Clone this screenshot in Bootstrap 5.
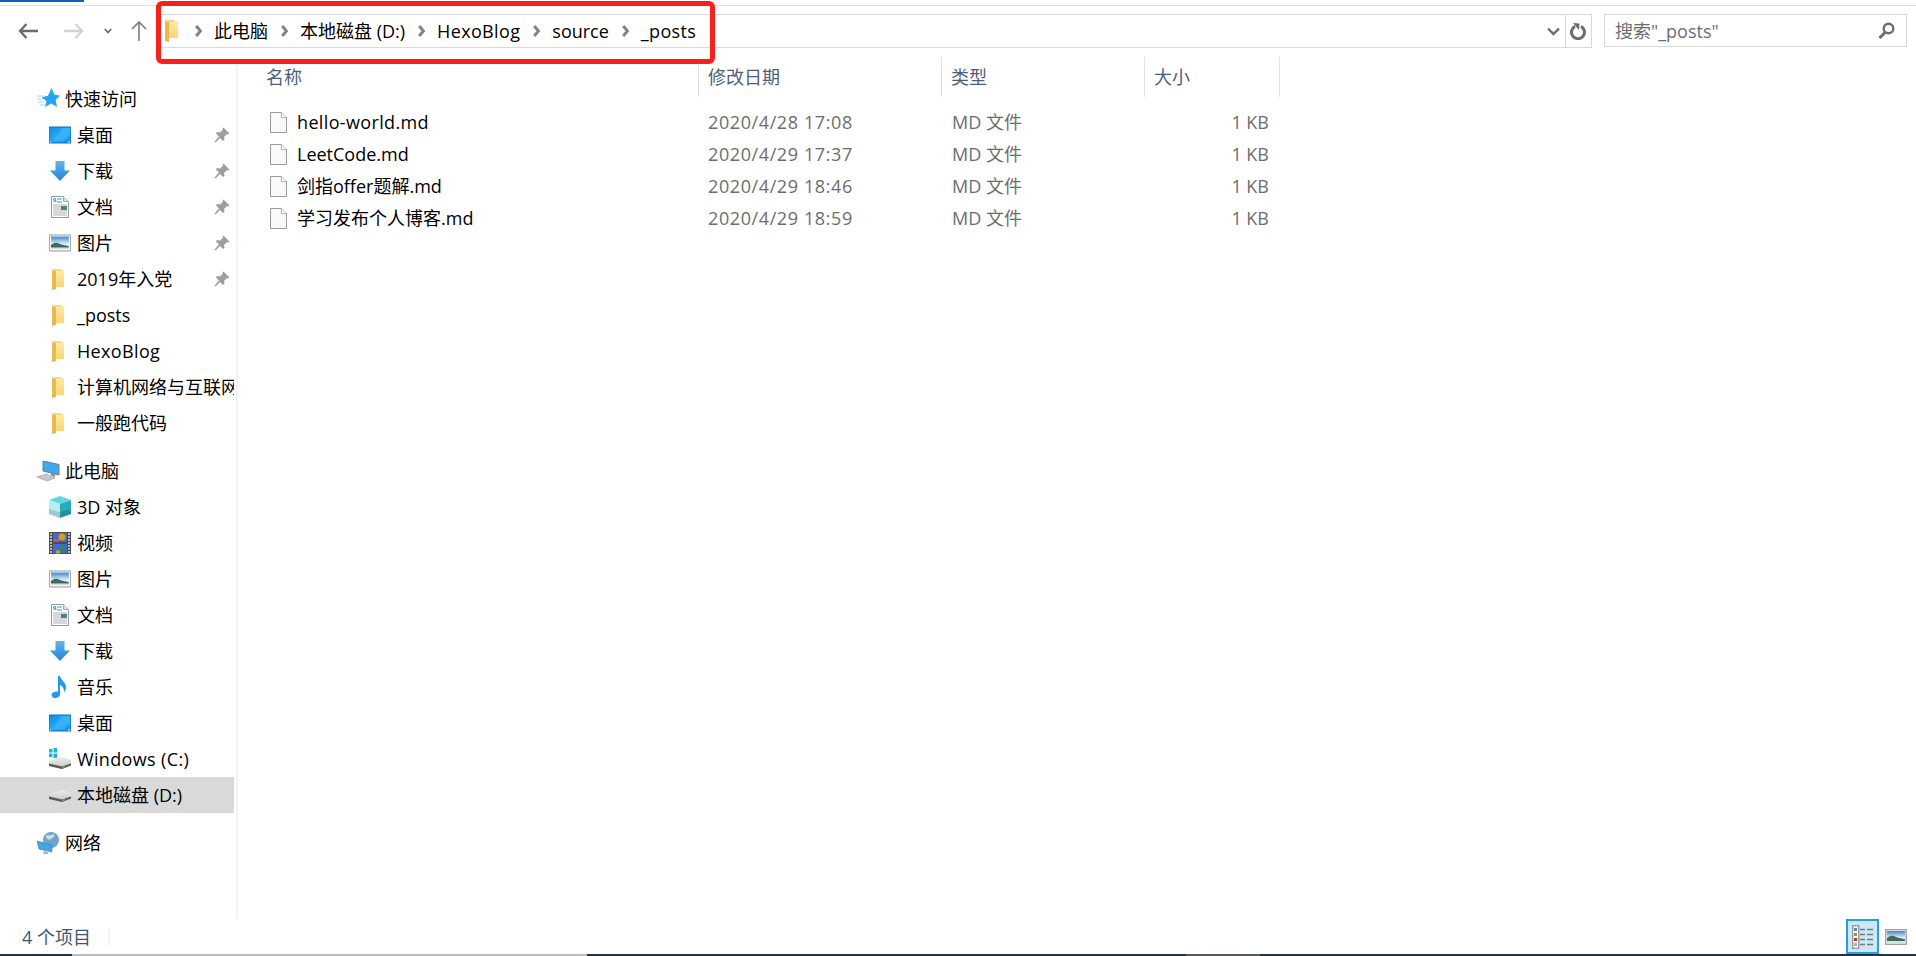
<!DOCTYPE html>
<html lang="zh-CN">
<head>
<meta charset="utf-8">
<title>_posts</title>
<link rel="stylesheet" href="https://cdn.jsdelivr.net/npm/bootstrap@5.3.0/dist/css/bootstrap.min.css">
<style>
html,body{height:956px;overflow:hidden;background:#fff}
body{font-family:"Open Sans","Noto Sans CJK SC",sans-serif;font-size:18px;line-height:24px;color:#000;width:1916px;position:relative}
svg{display:block;flex:none}
.tab-strip{height:6px;border-bottom:1px solid #e0e0e0;background:#fff}
.tab-blue{width:84px;height:2px;background:#0b63b0}
.tool-row{height:51px;padding:8px 9px 0 18px}
.nav-btns{width:142px;height:34px}
.nb-fwd{margin-left:26px}.nb-down{margin-left:20px}.nb-up{margin-left:19px}
.addr{width:1432px;height:34px;border:1px solid #d9d9d9;padding-left:3px}
.crumb-fold{margin-right:16px}
.crumb-sep{margin:0 12px 0 13px}
.crumb-first{margin-left:0}
.latin-wide{letter-spacing:.35px}
.addr-end{height:100%;border-left:1px solid #d9d9d9;width:26px}
.addr-drop{margin-right:5px}
.search-box{width:303px;height:33px;border:1px solid #d9d9d9;margin-left:12px;padding:0 11px 0 10px;color:#6d6d6d}
.body-row{height:862px}
.side{width:238px;border-right:2px solid #f3f3f3;padding-top:24px;flex:none}
.side-group{margin-bottom:12px}
.side-item{height:36px;width:234px;padding-left:49px;white-space:nowrap;overflow:hidden;position:relative}
.side-item.is-top{padding-left:37px}
.side-item.is-sel{background:#d9d9d9}
.side-ico{width:22px;height:22px;margin-right:6px;flex:none}
.side-item.is-top .side-ico{margin-right:5px;width:23px}
.pin-ico{position:absolute;left:214px;top:10px}
.main-pane{min-width:0}
.col-h{height:40px;color:#4c607a}
.col-a{width:461px;padding-left:28px}
.col-b{width:243px;padding-left:9px}
.col-c{width:203px;padding-left:9px}
.col-d{width:135px;padding-left:9px}
.col-h>div{height:40px;border-right:1px solid #e2e2e2;line-height:41px}
.file-list{margin-top:9px}
.file-row{height:32px;color:#6d6d6d}
.f-a{width:461px;padding-left:32px;color:#000}
.f-b{width:243px;padding-left:9px;letter-spacing:.6px}
.f-c{width:203px;padding-left:10px}
.f-d{width:135px;padding-right:11px;text-align:right}
.file-ico{margin-right:10px}
.status-row{height:35px;padding-left:22px;color:#3e5573}
.status-sep{width:2px;height:18px;background:#f3f3f3;margin-left:17px}
.view-btns{margin-left:auto;margin-right:9px;height:100%}
.view-on{width:33px;height:35px;border:2px solid #26a0da;background:#cbe8f6}
.view-off{margin-left:6px}
.base-strip{height:2px;background:#26343c}
.base-gray{width:515px;margin-left:72px;background:#bdbdbd;height:2px}
.base-mid{width:74px;margin-left:599px;background:#555c60;height:2px}
.red-mark{position:absolute;left:156px;top:1px;width:559px;height:63px;border:5px solid #f5211a;border-radius:6px;pointer-events:none}
</style>
</head>
<body>
<svg width="0" height="0" class="position-absolute">
<defs>
<linearGradient id="gBlue" x1="0" y1="0" x2="0" y2="1"><stop offset="0" stop-color="#5eb4ef"/><stop offset="1" stop-color="#2b80d6"/></linearGradient>
<linearGradient id="gDesk" x1="0" y1="0" x2="1" y2="1"><stop offset="0" stop-color="#0a8fe8"/><stop offset=".55" stop-color="#2ba9f6"/><stop offset="1" stop-color="#0f8ce6"/></linearGradient>
<linearGradient id="gFold" x1="0" y1="0" x2="0" y2="1"><stop offset="0" stop-color="#fde9a8"/><stop offset="1" stop-color="#f9d677"/></linearGradient>
<linearGradient id="gSky" x1="0" y1="0" x2="0" y2="1"><stop offset="0" stop-color="#3f86d8"/><stop offset=".55" stop-color="#dfeaf0"/><stop offset="1" stop-color="#d8e0e0"/></linearGradient>
<linearGradient id="gDrive" x1="0" y1="0" x2="0" y2="1"><stop offset="0" stop-color="#ececec"/><stop offset="1" stop-color="#c4c4c4"/></linearGradient>
<symbol id="i-star" viewBox="0 0 23 22"><path d="M14.500 0l3 6.800 5.500.8-4.300 4.500 1.300 7-5.800-3.500-6.200 3.500 1.500-5.800-4.800-4 6.200-1.500z" fill="#29a3f5"/><path d="M0 8h7M0 11h6M1 14h6M3 17h5" stroke="#9bd3f7" stroke-width="1.200"/></symbol>
<symbol id="i-desk" viewBox="0 0 22 22"><rect x="0" y="3" width="22" height="16" fill="url(#gDesk)" stroke="#0c72c0"/><path d="M13 4L4 17h11l6-6V4z" fill="#49b9fb" opacity=".5"/><path d="M1 18h1M19 18h2" stroke="#fff"/></symbol>
<symbol id="i-down" viewBox="0 0 22 22"><path d="M6.500 1h9v9.500H21L11 21 1 10.500h5.500z" fill="url(#gBlue)"/></symbol>
<symbol id="i-doc" viewBox="0 0 22 22"><path d="M2.500 0.500h12l5 5v16h-17z" fill="#fff" stroke="#9a9a9a"/><path d="M14.500 .5v5h5" fill="#e0e0e0" stroke="#aaa"/><path d="M4 4l2-2 1 4zM8 3h5M8 6h5" stroke="#2d9be6" fill="none"/><path d="M4 9h14M4 11h8M4 13h8M4 15h14M4 17h14M4 19h14" stroke="#b0b0b0"/><rect x="12" y="10" width="6" height="4" fill="#4c7f8e"/></symbol>
<symbol id="i-pic" viewBox="0 0 22 22"><rect x=".5" y="3" width="21" height="16" fill="#fff" stroke="#a9a9a9" stroke-width="1.200"/><rect x="2" y="4.500" width="18" height="13" fill="url(#gSky)"/><path d="M2 13c4-3 6-2.500 9-1s6 1 9 2.500V15H2z" fill="#3f6a58"/><path d="M2 15h18v1H2z" fill="#8ea8a4"/></symbol>
<symbol id="i-fold" viewBox="0 0 22 22"><path d="M3 1l4 1.500V21l-4 1z" fill="#e7b94e"/><path d="M7 2h8v17H7z" fill="url(#gFold)"/><path d="M3 1h9v2H3z" fill="#f6d97f"/></symbol>
<symbol id="i-pc" viewBox="0 0 23 22"><path d="M6 1l16 3.500V15L6 11z" fill="#3fa8ee" stroke="#6d7c88"/><path d="M14 14l4 2" stroke="#8a8a8a" stroke-width="2"/><path d="M0 17l9-3 9 4-8 3z" fill="#c7c9cb" stroke="#9ba0a4" stroke-width=".7"/></symbol>
<symbol id="i-cube" viewBox="0 0 22 22"><path d="M11 0l11 4-11 4L0 4z" fill="#60d6de"/><path d="M0 4l11 4v14L0 18z" fill="#b6eef0"/><path d="M22 4L11 8v14l11-4z" fill="#2aa9bd"/><path d="M0 13l11 3 11-3v5l-11 4-11-4z" fill="#000" opacity=".14"/></symbol>
<symbol id="i-video" viewBox="0 0 22 22"><rect width="22" height="22" fill="#4d4d4d"/><path d="M1 2h2M1 5h2M1 8h2M1 11h2M1 14h2M1 17h2M1 20h2M19 2h2M19 5h2M19 8h2M19 11h2M19 14h2M19 17h2M19 20h2" stroke="#d8d8d8" stroke-width="1.400"/><rect x="4" y="1" width="14" height="9" fill="#3f68d8"/><rect x="4" y="12" width="14" height="9" fill="#3f68d8"/><circle cx="13" cy="5" r="3.500" fill="#d9a015"/><rect x="5" y="7" width="5" height="2.500" fill="#d9468e"/><circle cx="13" cy="17" r="3" fill="#2f8c3d"/><circle cx="9" cy="20" r="2" fill="#d9a015"/></symbol>
<symbol id="i-music" viewBox="0 0 22 22"><path d="M9 0h2c.5 4 6 6 6 11 0 2.500-1 4-2 5 .2-3-1-6-4-7v9c0 2.500-2.500 4-5 4s-3.500-1.500-3.500-3c0-2.500 3-4 6.500-3.500z" fill="#1f99ec"/></symbol>
<symbol id="i-win" viewBox="0 0 22 22"><path d="M0 13l13-4 9 3v5l-9 4-13-3z" fill="url(#gDrive)"/><path d="M0 15.500l13 3 9-3v2L13 21 0 18z" fill="#5a5a5a"/><path d="M13 19.500l3-1" stroke="#5cc45c"/><path d="M0 1h3.500v3.500H0zM4.500 0H8v4.500H4.500zM0 5.500h3.500V9H0zM4.500 5.500H8V10H4.500z" fill="#19b5ee"/></symbol>
<symbol id="i-disk" viewBox="0 0 22 22"><path d="M0 10l13-4 9 3v5l-9 4-13-3z" fill="url(#gDrive)"/><path d="M0 12.500l13 3 9-3v2L13 18 0 15z" fill="#5a5a5a"/><path d="M13 16.500l3-1" stroke="#5cc45c"/></symbol>
<symbol id="i-net" viewBox="0 0 23 22"><circle cx="14" cy="8" r="8" fill="#6fa5c8"/><path d="M9 3c3 1 6 0 8-1 1 2-1 4-3 5-3 2-5-1-5-4z" fill="#cfe3ee"/><path d="M0 9l15 4v7L2 17z" fill="#3ea8ef" stroke="#5c7f98" stroke-width=".7"/><path d="M7 19l4 1v2H6z" fill="#aab4ba"/></symbol>
<symbol id="i-pin" viewBox="0 0 16 16"><path d="M9.500 0.500l6 6-1.500 1-1-.5-3 3 .5 3-1.500 1-3-3-4.500 4.500-1-1L5 9.500l-3-3 1-1.500 3 .5 3-3-.5-1z" fill="#98a0a6"/></symbol>
<symbol id="i-file" viewBox="0 0 17 21"><path d="M.5.5h11l5 5v15H.5z" fill="#f7f9fb" stroke="#9b9b9b"/><path d="M11.500.5v5h5" fill="#fff" stroke="#b5b5b5"/></symbol>
<symbol id="i-sep" viewBox="0 0 7 12"><path d="M1.200 1L5.500 6 1.200 11" fill="none" stroke="#848484" stroke-width="3"/></symbol>
</defs>
</svg>

<div class="tab-strip"><div class="tab-blue"></div></div>

<div class="tool-row d-flex align-items-start">
  <div class="nav-btns d-flex align-items-center">
    <svg width="20" height="16" viewBox="0 0 20 16"><path d="M8.500 1L2 8l6.500 7M2.500 8H20" fill="none" stroke="#6d6d6d" stroke-width="2.400"/></svg>
    <svg class="nb-fwd" width="20" height="16" viewBox="0 0 20 16"><path d="M11.500 1L18 8l-6.500 7M17.500 8H0" fill="none" stroke="#d3d3d3" stroke-width="2.400"/></svg>
    <svg class="nb-down" width="8" height="6" viewBox="0 0 8 6"><path d="M.8 1L4 4.500 7.200 1" fill="none" stroke="#6d6d6d" stroke-width="1.800"/></svg>
    <svg class="nb-up" width="16" height="20" viewBox="0 0 16 20"><path d="M1 8l7-7 7 7M8 1v19" fill="none" stroke="#7d7d7d" stroke-width="1.600"/></svg>
  </div>
  <div class="addr d-flex align-items-center">
    <svg class="crumb-fold" width="15" height="22" viewBox="0 0 15 22"><path d="M1 0l4 1.500V22l-4-1z" fill="#e7b94e"/><path d="M5 1h9v17H5z" fill="url(#gFold)"/><path d="M1 0h9v2H1z" fill="#f6d97f"/></svg>
    <svg class="crumb-sep crumb-first" width="7" height="12"><use href="#i-sep"/></svg>
    <span>此电脑</span>
    <svg class="crumb-sep" width="7" height="12"><use href="#i-sep"/></svg>
    <span>本地磁盘 (D:)</span>
    <svg class="crumb-sep" width="7" height="12"><use href="#i-sep"/></svg>
    <span class="latin-wide">HexoBlog</span>
    <svg class="crumb-sep" width="7" height="12"><use href="#i-sep"/></svg>
    <span>source</span>
    <svg class="crumb-sep" width="7" height="12"><use href="#i-sep"/></svg>
    <span class="latin-wide">_posts</span>
    <svg class="addr-drop ms-auto" width="13" height="9" viewBox="0 0 13 9"><path d="M1 1.500l5.500 5.500L12 1.500" fill="none" stroke="#6d6d6d" stroke-width="2.400"/></svg>
    <div class="addr-end d-flex align-items-center justify-content-center">
      <svg width="17" height="17" viewBox="0 0 17 17"><path d="M5 3.400a6.500 6.500 0 1 0 6 0" fill="none" stroke="#6d6d6d" stroke-width="3"/><path d="M3 0l6.500 .6-.6 6.400z" fill="#6d6d6d"/></svg>
    </div>
  </div>
  <div class="search-box d-flex align-items-center justify-content-between">
    <span>搜索"_posts"</span>
    <svg width="17" height="17" viewBox="0 0 17 17"><circle cx="10.500" cy="6.500" r="4.800" fill="none" stroke="#6d6d6d" stroke-width="2.400"/><path d="M7 10.500L1.500 16" stroke="#6d6d6d" stroke-width="3"/></svg>
  </div>
</div>

<div class="body-row d-flex">
  <nav class="side">
    <div class="side-group">
      <div class="side-item is-top d-flex align-items-center"><svg class="side-ico"><use href="#i-star"/></svg>快速访问</div>
      <div class="side-item d-flex align-items-center"><svg class="side-ico"><use href="#i-desk"/></svg>桌面<svg class="pin-ico" width="16" height="16"><use href="#i-pin"/></svg></div>
      <div class="side-item d-flex align-items-center"><svg class="side-ico"><use href="#i-down"/></svg>下载<svg class="pin-ico" width="16" height="16"><use href="#i-pin"/></svg></div>
      <div class="side-item d-flex align-items-center"><svg class="side-ico"><use href="#i-doc"/></svg>文档<svg class="pin-ico" width="16" height="16"><use href="#i-pin"/></svg></div>
      <div class="side-item d-flex align-items-center"><svg class="side-ico"><use href="#i-pic"/></svg>图片<svg class="pin-ico" width="16" height="16"><use href="#i-pin"/></svg></div>
      <div class="side-item d-flex align-items-center"><svg class="side-ico"><use href="#i-fold"/></svg>2019年入党<svg class="pin-ico" width="16" height="16"><use href="#i-pin"/></svg></div>
      <div class="side-item d-flex align-items-center"><svg class="side-ico"><use href="#i-fold"/></svg>_posts</div>
      <div class="side-item d-flex align-items-center"><svg class="side-ico"><use href="#i-fold"/></svg><span class="latin-wide">HexoBlog</span></div>
      <div class="side-item d-flex align-items-center"><svg class="side-ico"><use href="#i-fold"/></svg>计算机网络与互联网</div>
      <div class="side-item d-flex align-items-center"><svg class="side-ico"><use href="#i-fold"/></svg>一般跑代码</div>
    </div>
    <div class="side-group">
      <div class="side-item is-top d-flex align-items-center"><svg class="side-ico"><use href="#i-pc"/></svg>此电脑</div>
      <div class="side-item d-flex align-items-center"><svg class="side-ico"><use href="#i-cube"/></svg>3D 对象</div>
      <div class="side-item d-flex align-items-center"><svg class="side-ico"><use href="#i-video"/></svg>视频</div>
      <div class="side-item d-flex align-items-center"><svg class="side-ico"><use href="#i-pic"/></svg>图片</div>
      <div class="side-item d-flex align-items-center"><svg class="side-ico"><use href="#i-doc"/></svg>文档</div>
      <div class="side-item d-flex align-items-center"><svg class="side-ico"><use href="#i-down"/></svg>下载</div>
      <div class="side-item d-flex align-items-center"><svg class="side-ico"><use href="#i-music"/></svg>音乐</div>
      <div class="side-item d-flex align-items-center"><svg class="side-ico"><use href="#i-desk"/></svg>桌面</div>
      <div class="side-item d-flex align-items-center"><svg class="side-ico"><use href="#i-win"/></svg><span class="latin-wide">Windows (C:)</span></div>
      <div class="side-item is-sel d-flex align-items-center"><svg class="side-ico"><use href="#i-disk"/></svg>本地磁盘 (D:)</div>
    </div>
    <div class="side-group">
      <div class="side-item is-top d-flex align-items-center"><svg class="side-ico"><use href="#i-net"/></svg>网络</div>
    </div>
  </nav>
  <main class="main-pane flex-grow-1">
    <div class="col-h d-flex">
      <div class="col-a">名称</div>
      <div class="col-b">修改日期</div>
      <div class="col-c">类型</div>
      <div class="col-d">大小</div>
    </div>
    <div class="file-list">
      <div class="file-row d-flex align-items-center"><div class="f-a d-flex align-items-center"><svg class="file-ico" width="17" height="21"><use href="#i-file"/></svg><span class="latin-wide">hello-world.md</span></div><div class="f-b">2020/4/28 17:08</div><div class="f-c">MD 文件</div><div class="f-d">1 KB</div></div>
      <div class="file-row d-flex align-items-center"><div class="f-a d-flex align-items-center"><svg class="file-ico" width="17" height="21"><use href="#i-file"/></svg>LeetCode.md</div><div class="f-b">2020/4/29 17:37</div><div class="f-c">MD 文件</div><div class="f-d">1 KB</div></div>
      <div class="file-row d-flex align-items-center"><div class="f-a d-flex align-items-center"><svg class="file-ico" width="17" height="21"><use href="#i-file"/></svg>剑指offer题解.md</div><div class="f-b">2020/4/29 18:46</div><div class="f-c">MD 文件</div><div class="f-d">1 KB</div></div>
      <div class="file-row d-flex align-items-center"><div class="f-a d-flex align-items-center"><svg class="file-ico" width="17" height="21"><use href="#i-file"/></svg>学习发布个人博客.md</div><div class="f-b">2020/4/29 18:59</div><div class="f-c">MD 文件</div><div class="f-d">1 KB</div></div>
    </div>
  </main>
</div>

<div class="status-row d-flex align-items-center">
  <span>4 个项目</span><div class="status-sep"></div>
  <div class="view-btns d-flex align-items-center">
    <div class="view-on d-flex align-items-center justify-content-center">
      <svg width="21" height="24" viewBox="0 0 21 24"><rect x=".7" y=".7" width="6" height="22.600" fill="#fff" stroke="#9a9a9a" stroke-width="1.400"/><rect x="2" y="3" width="3" height="3" fill="#5d89a8"/><rect x="2" y="8" width="3" height="3" fill="#99993a"/><rect x="2" y="13" width="3" height="3" fill="#c0392b"/><rect x="2" y="18" width="3" height="3" fill="#9fb0c0"/><path d="M8 4.500h5M15 4.500h6M8 9.500h5M15 9.500h6M8 14.500h5M15 14.500h6M8 19.500h5M15 19.500h6" stroke="#777" stroke-width="1.400"/></svg>
    </div>
    <svg class="view-off" width="22" height="16" viewBox="0 0 22 16"><rect x=".7" y=".7" width="20.600" height="14.600" fill="#fff" stroke="#a0a0a0" stroke-width="1.400"/><rect x="2" y="2" width="18" height="12" fill="url(#gSky)"/><path d="M2 9c4-3 6-2.500 9-1s6 1 9 2.500V12H2z" fill="#3f6a58"/></svg>
  </div>
</div>

<div class="base-strip d-flex"><div class="base-gray"></div><div class="base-mid"></div></div>

<div class="red-mark"></div>
<script src="https://cdn.jsdelivr.net/npm/bootstrap@5.3.0/dist/js/bootstrap.bundle.min.js"></script>
</body>
</html>
